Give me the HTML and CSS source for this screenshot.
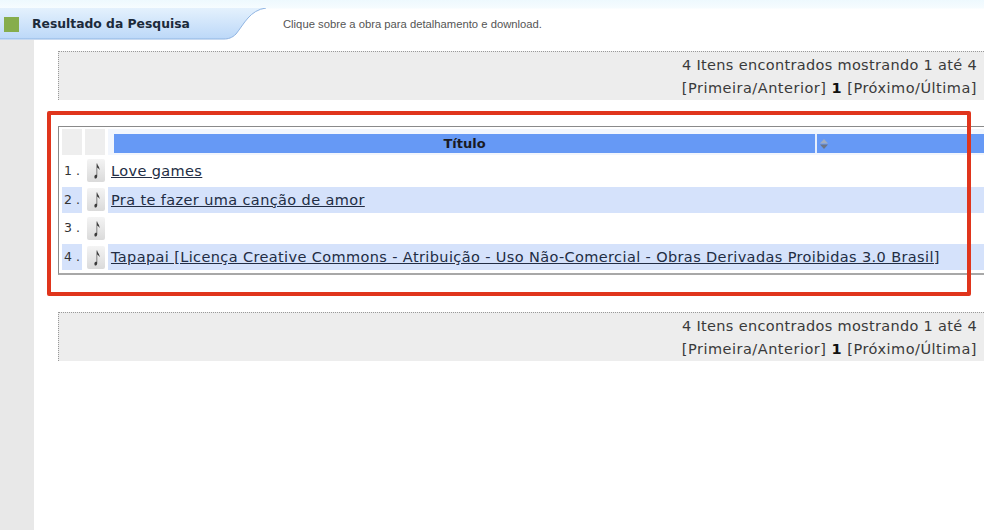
FILE: index.html
```html
<!DOCTYPE html>
<html lang="pt">
<head>
<meta charset="utf-8">
<title>Resultado da Pesquisa</title>
<link rel="stylesheet" href="styles.css">
</head>
<body>
<svg class="defs" width="0" height="0" aria-hidden="true">
  <symbol id="note" viewBox="0 0 18 23">
    <path d="M7.400 17.500C7.400 16.400 8.300 15.800 9.600 15.800L9.600 4.500L10.200 4.500C10.500 7 13 8 12.400 11.200C12 9.800 11.100 9 10.200 8.600L10.200 17.500C10.200 18.800 9.100 19.700 8 19.500C7.600 19.300 7.400 18.300 7.400 17.500Z" fill="#3a3a3a"/>
  </symbol>
</svg>
<header class="topbar">
  <div class="tab">
    <svg class="tab-shape" width="270" height="32" viewBox="0 0 270 32" aria-hidden="true">
      <defs>
        <linearGradient id="tabfill" x1="0" y1="0" x2="0" y2="1">
          <stop offset="0" stop-color="#e4f1fd"/>
          <stop offset="1" stop-color="#bcd8f8"/>
        </linearGradient>
      </defs>
      <path d="M0 0H266C250 2 244 16 236 26C232 30 228 31 224 31H0Z" fill="url(#tabfill)"/>
      <path d="M266 0C250 2 244 16 236 26C232 30 228 31 224 31H0" fill="none" stroke="#8fb4e2" stroke-width="1"/>
    </svg>
    <span class="square"></span>
    <h1 class="tab-title">Resultado da Pesquisa</h1>
  </div>
  <p class="hint">Clique sobre a obra para detalhamento e download.</p>
</header>
<div class="page">
  <aside class="side"></aside>
  <main class="content">
    <section class="pager">
      <div class="count">4 Itens encontrados mostrando 1 até 4</div>
      <div>[Primeira/Anterior] <b>1</b> [Próximo/Última]</div>
    </section>
    <section class="results">
      <div class="row head">
        <span class="num"></span>
        <span class="ico"></span>
        <div class="cell">
          <div class="head-bar">
            <span class="col-title">Título</span>
            <span class="col-sort">
              <svg width="10" height="12" viewBox="0 0 10 12" aria-hidden="true"><path d="M5 1L9 5.500H1Z" fill="#a3aebf"/><path d="M5 11L9 6.500H1Z" fill="#6d7686"/></svg>
            </span>
          </div>
        </div>
      </div>
      <div class="row">
        <span class="num">1 .</span>
        <span class="ico"><svg class="note" aria-hidden="true"><use href="#note"/></svg></span>
        <div class="cell"><a class="title" href="#">Love games</a></div>
      </div>
      <div class="row alt">
        <span class="num">2 .</span>
        <span class="ico"><svg class="note" aria-hidden="true"><use href="#note"/></svg></span>
        <div class="cell"><a class="title" href="#">Pra te fazer uma canção de amor</a></div>
      </div>
      <div class="row">
        <span class="num">3 .</span>
        <span class="ico"><svg class="note" aria-hidden="true"><use href="#note"/></svg></span>
        <div class="cell"></div>
      </div>
      <div class="row alt">
        <span class="num">4 .</span>
        <span class="ico"><svg class="note" aria-hidden="true"><use href="#note"/></svg></span>
        <div class="cell"><a class="title" href="#">Tapapai [Licença Creative Commons - Atribuição - Uso Não-Comercial - Obras Derivadas Proibidas 3.0 Brasil]</a></div>
      </div>
    </section>
    <section class="pager lower">
      <div class="count">4 Itens encontrados mostrando 1 até 4</div>
      <div>[Primeira/Anterior] <b>1</b> [Próximo/Última]</div>
    </section>
    <div class="highlight"></div>
  </main>
</div>
</body>
</html>
```
FILE: styles.css
```css
* { box-sizing: border-box; }
html, body { margin: 0; height: 100%; overflow: hidden; }
body {
  width: 984px;
  height: 530px;
  background: #fff;
  font-family: "DejaVu Sans", Verdana, sans-serif;
  color: #333;
  display: flex;
  flex-direction: column;
}
.defs { position: absolute; }
.topbar {
  height: 40px;
  flex: none;
  padding-top: 8px;
  display: flex;
  background: linear-gradient(#eef9fe 0, #f6fcff 8px, #fff 9px);
}
.tab {
  position: relative;
  width: 270px;
  height: 32px;
  flex: none;
  display: flex;
  align-items: center;
  padding-left: 4px;
  gap: 10px;
}
.tab-shape { position: absolute; left: 0; top: 0; }
.square {
  position: relative;
  width: 15px;
  height: 15px;
  background: #86ad4c;
}
.tab-title {
  position: relative;
  margin: 0 0 0 3px;
  font: bold 12.350px "DejaVu Sans", Verdana, sans-serif;
  white-space: nowrap;
  color: #1c2a3a;
}
.hint {
  margin: 0 0 0 13px;
  font: 11.250px/32px "Liberation Sans", Arial, sans-serif;
  color: #555;
}
.page { flex: 1; display: flex; min-height: 0; }
.side { width: 34px; flex: none; background: #e8e8e8; }
.content {
  position: relative;
  flex: 1;
  min-width: 0;
  padding: 11px 0 0 24px;
  display: flex;
  flex-direction: column;
}
.pager {
  height: 49px;
  flex: none;
  padding: 2px 7px 0 0;
  background: #ededed;
  border-top: 1px dotted #999;
  border-left: 1px dotted #999;
  text-align: right;
  font-size: 14.500px;
  letter-spacing: 0.500px;
  line-height: 23px;
  color: #3a3a3a;
}
.pager .count { letter-spacing: 0.320px; }
.pager b { color: #111; }
.results {
  height: 149px;
  flex: none;
  margin-top: 26px;
  padding: 2px 0 3px 3px;
  border-top: 1px solid #8a8a8a;
  border-left: 1px solid #8a8a8a;
  border-bottom: 2px solid #a8a8a8;
  display: flex;
  flex-direction: column;
  justify-content: space-between;
}
.row { display: flex; height: 26px; flex: none; }
.row .num {
  width: 20px;
  flex: none;
  font-size: 12.500px;
  line-height: 26px;
  padding-left: 2px;
  white-space: nowrap;
  color: #333;
}
.row .ico {
  width: 26px;
  flex: none;
  padding: 0 2px 0 4px;
  display: flex;
  justify-content: center;
  align-items: center;
}
.row .cell { flex: 1; min-width: 0; }
.row.head .cell { background: #f2f6fd; padding: 5px 0 2px 6px; }
.row.head .num { background: #eeeeee; }
.row.head .ico { background: linear-gradient(#eeeeee, #eeeeee) center / 20px 100% no-repeat; }
.row.alt .num, .row.alt .cell { background: #d5e2fb; }
.note {
  width: 18px;
  height: 23px;
  background: linear-gradient(#f4f4f4, #dadada);
  border-radius: 2px;
}
.title {
  margin-left: 3px;
  font-size: 14.500px;
  letter-spacing: 0.380px;
  line-height: 26px;
  color: #222d44;
  white-space: nowrap;
}
.head-bar {
  height: 19px;
  background: #6699f5;
  display: flex;
  font-weight: bold;
  font-size: 13px;
  line-height: 19px;
  color: #1a1a22;
}
.col-title { width: 703px; text-align: center; border-right: 2px solid #e6eefc; }
.col-sort { flex: 1; padding: 4px 0 0 2px; line-height: 0; }
.lower { margin-top: 37px; }
.highlight {
  position: absolute;
  left: 13px;
  top: 71px;
  width: 924px;
  height: 185px;
  border: 4px solid #e0351c;
  border-radius: 2px;
  pointer-events: none;
}
```
